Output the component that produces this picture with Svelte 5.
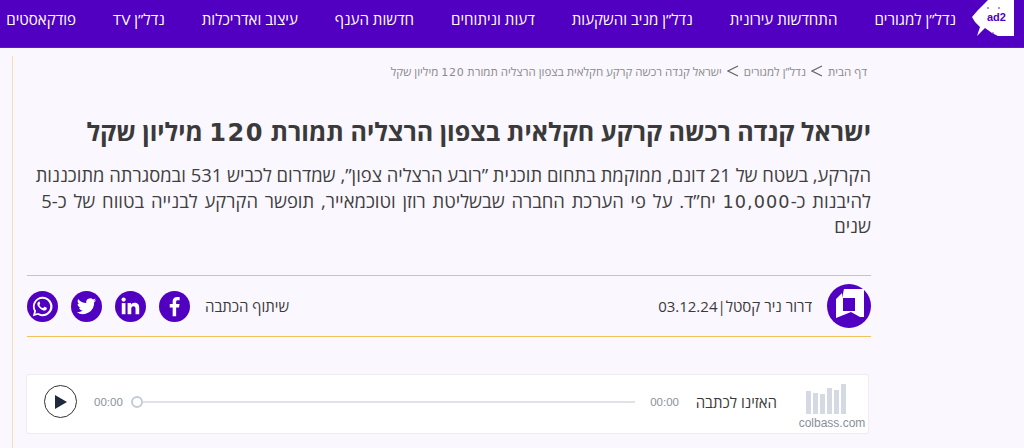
<script>
  const navItems = [
    'נדל”ן למגורים',
    'התחדשות עירונית',
    'נדל”ן מניב והשקעות',
    'דעות וניתוחים',
    'חדשות הענף',
    'עיצוב ואדריכלות',
    'נדל”ן TV',
    'פודקאסטים'
  ];
  const bars = [23, 21, 20, 26, 24, 30];
</script>

<div class="page" dir="rtl">
  <header class="topbar">
    <div class="logo">
      <svg width="42" height="37" viewBox="0 0 42 37">
        <path d="M16 0 L6 10 L0 17 L3 22 L8 27 L5 36 L13 28 L20 33 L26 36 L42 36 L42 0 Z" fill="#fff" />
        <text x="15" y="21" class="logo-text">ad2</text>
        <circle cx="16" cy="8" r="0.8" fill="#5100c2" />
        <circle cx="27" cy="8" r="0.8" fill="#5100c2" />
        <circle cx="21" cy="33" r="0.7" fill="#5100c2" />
      </svg>
    </div>
    <nav class="nav">
      {#each navItems as item}
        <span class="nav-item">{item}</span>
      {/each}
    </nav>
  </header>

  <div class="body">
    <main class="article">
      <div class="crumbs">
        <span>דף הבית</span>
        <svg class="chev" width="12" height="12" viewBox="0 0 12 12"><path d="M11 1 L1 6 L11 11" /></svg>
        <span>נדל”ן למגורים</span>
        <svg class="chev" width="12" height="12" viewBox="0 0 12 12"><path d="M11 1 L1 6 L11 11" /></svg>
        <span>ישראל קנדה רכשה קרקע חקלאית בצפון הרצליה תמורת <span class="num">120</span> מיליון שקל</span>
      </div>

      <h1>ישראל קנדה רכשה קרקע חקלאית בצפון הרצליה תמורת <span class="num">120</span> מיליון שקל</h1>
      <p class="lead">הקרקע, בשטח של 21 דונם, ממוקמת בתחום תוכנית ”רובע הרצליה צפון”, שמדרום לכביש 531 ובמסגרתה מתוכננות <span class="wide">להיבנות כ-<span class="num">10,000</span> יח”ד. על פי הערכת החברה שבשליטת רוזן וטוכמאייר, תופשר הקרקע לבנייה בטווח של כ-5</span><br />שנים</p>

      <div class="meta">
        <div class="author">
          <div class="avatar">
            <svg width="44" height="44" viewBox="0 0 44 44">
              <circle cx="22" cy="22" r="22" fill="#5100c2" />
              <path d="M17 5 H37 V33 H33 L24 28 L9 34 V15 L15 9 V14 Z" fill="#fff" />
              <rect x="16" y="14" width="12" height="13" fill="#5100c2" />
            </svg>
          </div>
          <div class="byline">
            <span>דרור ניר קסטל</span>
            <span>|</span>
            <span>03.12.24</span>
          </div>
        </div>
        <div class="share">
          <span class="share-label">שיתוף הכתבה</span>
          <span class="social">
            <svg viewBox="0 0 32 32" width="31" height="31"><circle cx="16" cy="16" r="16" /><path class="w" d="M17.7 26v-9h3l.5-3.600h-3.500v-2.200c0-1 .3-1.700 1.800-1.700h1.800V6.300c-.4 0-1.500-.2-2.700-.2-2.700 0-4.500 1.600-4.500 4.600v2.700h-3V17h3v9z" /></svg>
          </span>
          <span class="social">
            <svg viewBox="0 0 32 32" width="31" height="31"><circle cx="16" cy="16" r="16" /><rect class="w" x="7" y="12.500" width="3.800" height="11.500" /><circle class="w" cx="8.900" cy="8.900" r="2.200" /><path class="w" d="M13 12.500h3.600v1.600c.6-1 1.900-1.900 3.700-1.900 3.800 0 4.700 2.400 4.700 5.700V24h-3.800v-5.300c0-1.500-.3-3-2-3-1.900 0-2.400 1.300-2.400 3V24H13z" /></svg>
          </span>
          <span class="social">
            <svg viewBox="0 0 32 32" width="31" height="31"><circle cx="16" cy="16" r="16" /><path class="w" d="M26 9.500c-.8.300-1.500.500-2.400.600.900-.500 1.500-1.300 1.800-2.300-.8.500-1.700.800-2.600 1a4.100 4.100 0 0 0-7 3.700c-3.400-.2-6.400-1.800-8.400-4.300-1.100 1.900-.5 4.300 1.300 5.500-.7 0-1.300-.2-1.900-.5 0 2 1.400 3.700 3.300 4.100-.6.200-1.200.2-1.900.1.500 1.600 2 2.800 3.800 2.800A8.300 8.300 0 0 1 6 21.900a11.600 11.600 0 0 0 17.900-10.300c.8-.6 1.500-1.300 2.100-2.100z" /></svg>
          </span>
          <span class="social">
            <svg viewBox="0 0 32 32" width="31" height="31"><circle cx="16" cy="16" r="16" /><path class="w" fill-rule="evenodd" d="M16 6a10 10 0 0 0-8.600 15L6 26l5.200-1.400A10 10 0 1 0 16 6zm0 2a8 8 0 1 1-4.400 14.700l-3 .8.800-2.900A8 8 0 0 1 16 8z" /><path class="w" d="M12.500 11c-.3 0-.8.100-1.200.6-.8 1-.9 2.500.2 4.200 1.300 2 3 3.500 5.400 4.200 1.500.4 2.900-.3 3.400-1.500.2-.5.200-1 .1-1.100l-2.200-1.100c-.2-.1-.4 0-.5.100l-.9 1.100c-.1.100-.3.200-.5.100-1.500-.6-2.700-1.700-3.400-3-.1-.2-.1-.3 0-.5l.6-.8c.1-.2.100-.4.100-.5l-.9-2.200c-.1-.4-.1-.6-.2-.6z" /></svg>
          </span>
        </div>
      </div>

      <div class="player">
        <div class="brand">
          <div class="bars">
            {#each bars as h}
              <i style="height: {h}px"></i>
            {/each}
          </div>
          <span class="brand-name">colbass.com</span>
        </div>
        <span class="listen">האזינו לכתבה</span>
        <span class="time" dir="ltr">00:00</span>
        <div class="track"><i class="knob"></i></div>
        <span class="time" dir="ltr">00:00</span>
        <button class="play" aria-label="play">
          <svg width="14" height="16" viewBox="0 0 14 16"><path d="M1 1 L13 8 L1 15 Z" fill="#1f2b3c" /></svg>
        </button>
      </div>
    </main>
  </div>
</div>

<style>
  :global(body) {
    margin: 0;
    background: #faf7fe;
  }

  .page {
    width: 1024px;
    height: 448px;
    overflow: hidden;
    font-family: "Open Sans", "Liberation Sans", sans-serif;
    color: #3a3a3a;
  }

  .topbar {
    height: 47px;
    background: #5100c2;
    border-bottom: 1px solid #4a2a9c;
    display: flex;
    align-items: flex-start;
    padding-right: 10px;
  }

  .logo {
    width: 42px;
    height: 37px;
  }

  .logo-text {
    direction: ltr;
    font-family: "Liberation Sans", sans-serif;
    font-size: 11px;
    font-weight: 700;
    fill: #5100c2;
  }

  .nav {
    display: flex;
    gap: 37px;
    margin-right: 16px;
    height: 37px;
    align-items: center;
  }

  .nav-item {
    color: #fff;
    font-size: 15.1px;
    font-weight: 500;
    white-space: nowrap;
  }

  .body {
    margin: 8px 153px 0 0;
    padding-left: 12px;
  }

  .article {
    border-left: 1px solid #f2dfb4;
    padding: 7px 0 0 14px;
    height: 385px;
  }

  .crumbs {
    display: flex;
    align-items: center;
    gap: 5px;
    font-size: 11.5px;
    color: #8a8a8a;
    height: 16px;
    padding-right: 4px;
  }

  .crumbs span {
    white-space: nowrap;
  }

  .chev {
    fill: none;
    stroke: #666;
    stroke-width: 1.2;
  }

  .num {
    font-family: "DejaVu Sans", sans-serif;
    font-size: 0.96em;
    line-height: 1;
    letter-spacing: 0.06em;
  }

  h1 {
    margin: 34px 0 0;
    font-size: 25.1px;
    line-height: 36px;
    font-weight: 700;
    color: #3a3a3a;
  }

  .lead {
    margin: 13px 0 0;
    font-size: 18.4px;
    line-height: 25.5px;
    color: #3f3f3f;
  }

  .wide {
    word-spacing: 2px;
  }

  .meta {
    margin-top: 36.5px;
    height: 60px;
    border-top: 1px solid #efc25a;
    border-bottom: 1px solid #efc25a;
    display: flex;
    align-items: center;
    justify-content: space-between;
  }

  .author {
    display: flex;
    align-items: center;
    gap: 15px;
    font-size: 15px;
  }

  .avatar {
    height: 44px;
  }

  .byline {
    display: flex;
  }

  .share {
    display: flex;
    align-items: center;
    gap: 13px;
    font-size: 15px;
  }

  .share-label {
    margin-left: 2px;
  }

  .social {
    width: 31px;
    height: 31px;
  }

  .social circle:first-child {
    fill: #5100c2;
  }

  .social .w {
    fill: #fff;
  }

  .player {
    margin-top: 37px;
    margin-left: -1px;
    margin-right: 2px;
    height: 53px;
    padding-bottom: 5px;
    background: #fff;
    border: 1px solid #eeecf2;
    border-radius: 3px;
    display: flex;
    align-items: center;
  }

  .brand {
    width: 72px;
    align-self: flex-start;
    display: flex;
    flex-direction: column;
    align-items: center;
    padding-top: 9px;
  }

  .bars {
    display: flex;
    flex-direction: row-reverse;
    align-items: flex-end;
    gap: 2.5px;
    height: 30px;
    margin-right: 12px;
  }

  .bars i {
    width: 4.5px;
    background: #d5d9e4;
  }

  .brand-name {
    font-family: "Liberation Sans", sans-serif;
    font-size: 12px;
    color: #8a8f98;
    margin-top: 2px;
  }

  .listen {
    font-size: 15px;
    margin-right: 19px;
    width: 98px;
    white-space: nowrap;
  }

  .time {
    font-family: "Liberation Sans", sans-serif;
    font-size: 11.5px;
    color: #8d9197;
  }

  .track {
    flex: 1;
    height: 2px;
    background: #dfe3e8;
    margin-right: 15px;
    margin-left: 14px;
    position: relative;
  }

  .knob {
    position: absolute;
    left: -6px;
    top: -5px;
    width: 8px;
    height: 8px;
    background: #fff;
    border: 2px solid #c3ccd6;
    border-radius: 50%;
  }

  .play {
    width: 33px;
    height: 33px;
    margin: 0 17px;
    padding: 0;
    background: #fff;
    border: 1px solid #333;
    border-radius: 50%;
    display: flex;
    align-items: center;
    justify-content: center;
  }
</style>
